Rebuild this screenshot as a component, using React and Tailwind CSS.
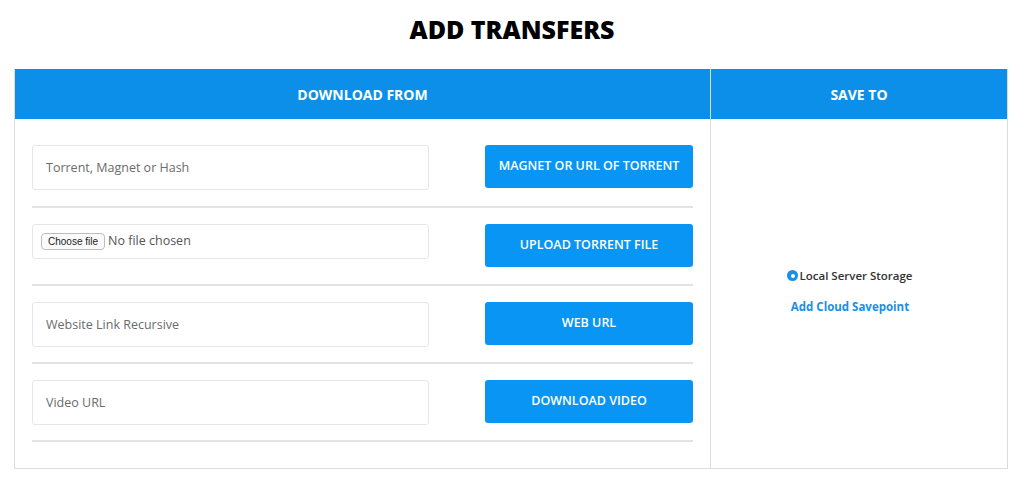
const ROWS = [
  { placeholder: 'Torrent, Magnet or Hash', button: 'MAGNET OR URL OF TORRENT' },
  { file: true, button: 'UPLOAD TORRENT FILE' },
  { placeholder: 'Website Link Recursive', button: 'WEB URL' },
  { placeholder: 'Video URL', button: 'DOWNLOAD VIDEO' },
];

function FileField() {
  return (
    <div className="w-[397px] h-[35px] border border-[#e6e6e6] rounded-[3px] bg-white flex items-center pl-[8px] gap-[3px]">
      <span className="h-[17px] px-[6px] flex items-center border border-[#bdbdbd] rounded-[4px] bg-[#fafafa] text-[10px] text-[#222] font-['Liberation_Sans',sans-serif]">
        Choose file
      </span>
      <span className="text-[12.5px] text-[#555]">No file chosen</span>
    </div>
  );
}

export default function App() {
  return (
    <div className="w-[1024px] h-[489px] bg-white font-['Open_Sans',sans-serif]">
      <h1 className="pt-[11px] text-center text-[25px] font-extrabold text-black h-[69px]">
        ADD TRANSFERS
      </h1>

      <div className="mx-[14px] w-[994px] border border-[#dcdcdc] border-t-0 flex">
        {/* download from */}
        <div className="w-[696px] border-r border-[#dcdcdc]">
          <div className="h-[50px] bg-[#0c8fe8] flex items-center justify-center text-white text-[14px] font-bold">
            DOWNLOAD FROM
          </div>
          <div className="px-[17px] pt-[9px] pb-[26px]">
            {ROWS.map((row, i) => (
              <div
                key={i}
                className="flex items-start justify-between pt-[16px] h-[78px] first:pt-[17px] first:h-[80px] border-b-2 border-[#e3e3e3]"
              >
                {row.file ? (
                  <FileField />
                ) : (
                  <input
                    placeholder={row.placeholder}
                    className="w-[397px] h-[45px] border border-[#e6e6e6] rounded-[3px] px-[13px] text-[12.5px] text-[#555] placeholder:text-[#6b6b6b] outline-none"
                  />
                )}
                <button className="w-[208px] h-[43px] bg-[#0895f3] rounded-[3px] text-white text-[12.5px] font-semibold">
                  {row.button}
                </button>
              </div>
            ))}
          </div>
        </div>

        {/* save to */}
        <div className="flex-1 flex flex-col">
          <div className="h-[50px] bg-[#0c8fe8] flex items-center justify-center text-white text-[14px] font-bold">
            SAVE TO
          </div>
          <div className="flex-1 flex flex-col items-center justify-center gap-[13px] pb-[5px] pr-[18px]">
            <label className="flex items-center text-[11.5px] font-semibold text-[#333]">
              <span className="w-[11px] h-[11px] rounded-full bg-[#1a8fe6] flex items-center justify-center mr-[1px]">
                <span className="w-[4px] h-[4px] rounded-full bg-white" />
              </span>
              Local Server Storage
            </label>
            <a className="text-[11.5px] font-bold text-[#1a8fe6] cursor-pointer">Add Cloud Savepoint</a>
          </div>
        </div>
      </div>
    </div>
  );
}
